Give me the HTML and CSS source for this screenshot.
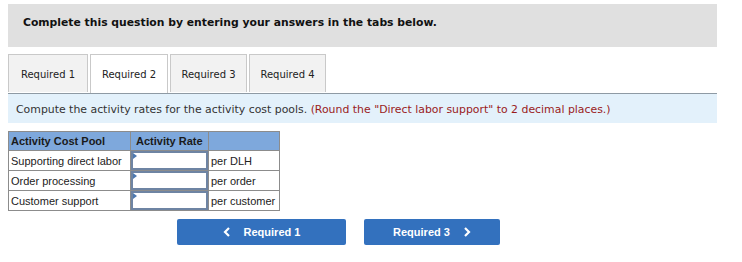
FILE: index.html
```html
<!DOCTYPE html>
<html lang="en">
<head>
    <meta charset="UTF-8">
    <title>Activity rates</title>
    <link rel="stylesheet" href="styles.css">
</head>
<body>
    <div class="wrap">
        <div class="banner">Complete this question by entering your answers in the tabs below.</div>

        <div class="tabs">
            <div class="tab">Required 1</div>
            <div class="tab active">Required 2</div>
            <div class="tab">Required 3</div>
            <div class="tab">Required 4</div>
        </div>

        <div class="prompt">
            Compute the activity rates for the activity cost pools. <span class="note">(Round the "Direct labor support" to 2 decimal places.)</span>
        </div>

        <table class="rates">
            <colgroup>
                <col class="c1">
                <col class="c2">
                <col class="c3">
            </colgroup>
            <tr>
                <th>Activity Cost Pool</th>
                <th class="rate">Activity Rate</th>
                <th></th>
            </tr>
            <tr>
                <td>Supporting direct labor</td>
                <td class="cell"><input type="text"></td>
                <td>per DLH</td>
            </tr>
            <tr>
                <td>Order processing</td>
                <td class="cell"><input type="text"></td>
                <td>per order</td>
            </tr>
            <tr>
                <td>Customer support</td>
                <td class="cell"><input type="text"></td>
                <td>per customer</td>
            </tr>
        </table>

        <div class="nav">
            <button class="btn prev">
                <svg class="chev" width="8" height="10" viewBox="0 0 8 10"><path d="M6 1 L2 5 L6 9" fill="none" stroke="#fff" stroke-width="2.2"/></svg>
                Required 1
            </button>
            <button class="btn next">
                Required 3
                <svg class="chev" width="8" height="10" viewBox="0 0 8 10"><path d="M2 1 L6 5 L2 9" fill="none" stroke="#fff" stroke-width="2.2"/></svg>
            </button>
        </div>
    </div>
</body>
</html>
```

FILE: styles.css
```css
body {
    margin: 0;
    font-family: "DejaVu Sans", Verdana, sans-serif;
    color: #222;
}
.wrap {
    width: 709px;
    margin: 4px 0 0 8px;
}
.banner {
    background-color: #e0e0e0;
    height: 43px;
    box-sizing: border-box;
    padding: 12px 0 0 15px;
    font-size: 10.8px;
    font-weight: bold;
    color: #111;
}
.tabs {
    display: flex;
    gap: 2px;
    margin-top: 7px;
    border-bottom: 1px solid #8e9aa4;
    height: 39px;
}
.tab {
    width: 77px;
    height: 38px;
    box-sizing: border-box;
    background-color: #f2f2f2;
    border: 1px solid #c9c9c9;
    border-bottom: none;
    font-size: 10px;
    line-height: 39px;
    text-align: center;
    color: #222;
}
.tab.active {
    background-color: #fff;
    height: 39px;
    width: 78px;
}
.tab:first-child {
    width: 80px;
}
.prompt {
    background-color: #e3f1fb;
    height: 29px;
    box-sizing: border-box;
    padding: 9px 0 0 8px;
    font-size: 10.9px;
    color: #333;
}
.note {
    color: #9a1b1b;
}
.rates {
    border-collapse: collapse;
    table-layout: fixed;
    width: 271px;
    margin-top: 8px;
    font-family: "Liberation Sans", Arial, sans-serif;
    font-size: 11px;
}
.rates col.c1 { width: 122px; }
.rates col.c2 { width: 78px; }
.rates col.c3 { width: 71px; }
.rates th,
.rates td {
    border: 1px solid #8c8c8c;
    padding: 0 2px;
    height: 19px;
    box-sizing: border-box;
    text-align: left;
    white-space: nowrap;
    overflow: hidden;
}
.rates th {
    background-color: #7ea8dc;
    font-weight: bold;
    color: #1a1a1a;
    height: 19px;
}
.rates th.rate {
    padding-left: 5px;
}
.rates td.cell {
    padding: 0;
    position: relative;
}
.rates td.cell input {
    display: block;
    width: 100%;
    height: 19px;
    box-sizing: border-box;
    border: 2px solid #6e84a3;
    margin: 0;
    padding: 0 4px;
}
.rates td.cell::before {
    content: "";
    position: absolute;
    left: 2px;
    top: 2px;
    border-top: 3px solid transparent;
    border-bottom: 3px solid transparent;
    border-left: 4px solid #4d79b0;
}
.nav {
    display: flex;
    gap: 18px;
    margin: 8px 0 0 169px;
}
.btn {
    display: flex;
    align-items: center;
    justify-content: center;
    gap: 13px;
    height: 26px;
    border: none;
    border-radius: 2px;
    background-color: #3371be;
    color: #fff;
    font-family: "Liberation Sans", Arial, sans-serif;
    font-size: 11px;
    font-weight: bold;
    cursor: pointer;
}
.btn.prev { width: 169px; }
.btn.next { width: 136px; }
```
